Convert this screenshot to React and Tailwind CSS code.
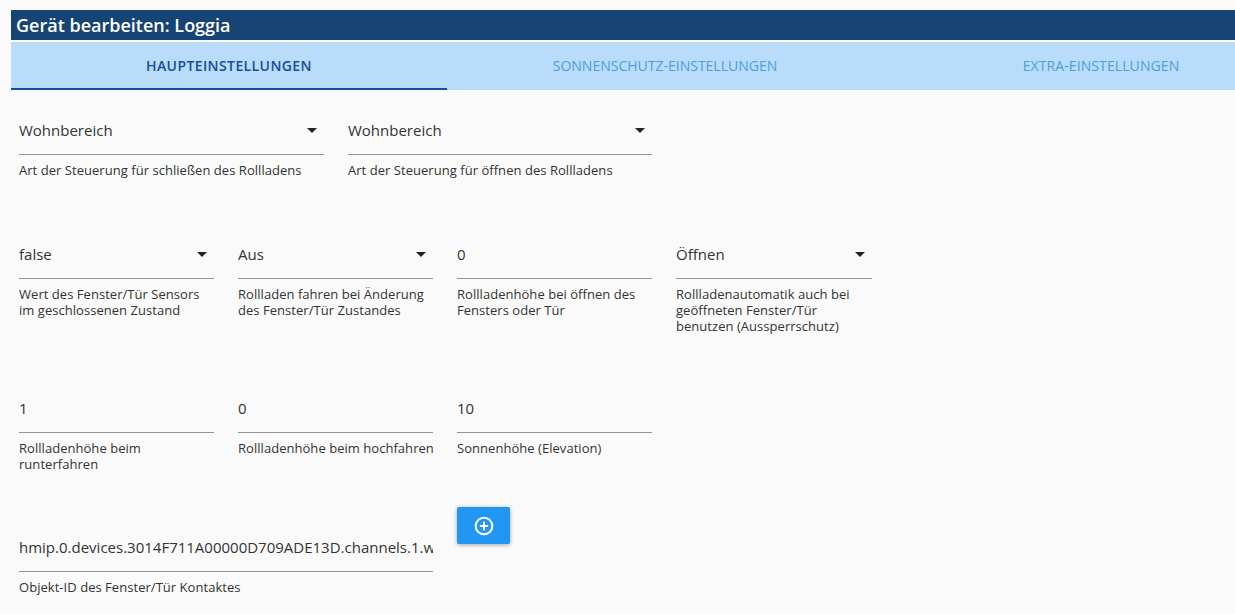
function Caret() {
  return <span className="w-0 h-0 border-x-[5px] border-x-transparent border-t-[5px] border-t-[#222] mr-[7px] flex-shrink-0" />;
}

function Field({ value, help, select, width = "w-[195px]", height = "h-[108px]" }) {
  return (
    <div className={`${width} ${height} flex-shrink-0`}>
      <div className="h-[47px] flex items-center justify-between border-b border-[#949494] pb-[2px] overflow-hidden">
        <span className="text-[15px] text-[#333] whitespace-nowrap">{value}</span>
        {select && <Caret />}
      </div>
      <p className="mt-[7px] -mr-[1px] text-[13px] leading-[16px] tracking-[0.04px] text-[#333]">{help}</p>
    </div>
  );
}

export default function App() {
  return (
    <div className="h-[614px] w-[1235px] overflow-hidden bg-[#fafafa] pt-[10px] pl-[11px] font-['Open_Sans','Noto_Sans',sans-serif]">
      <div className="h-[30px] bg-[#164475] text-white text-[18px] font-semibold leading-[30px] pl-[5px]">
        Gerät bearbeiten: Loggia
      </div>
      <div className="mt-[2px] h-[48px] bg-[#b8dcfa] flex text-[14px] uppercase">
        <div className="w-[436px] flex-shrink-0 flex items-center justify-center border-b-2 border-[#164d9c] font-semibold tracking-[0.4px] text-[#164d9c]">
          Haupteinstellungen
        </div>
        <div className="w-[436px] flex-shrink-0 flex items-center justify-center border-b-2 border-transparent text-[#4d9ee0]">
          Sonnenschutz-Einstellungen
        </div>
        <div className="w-[436px] flex-shrink-0 flex items-center justify-center border-b-2 border-transparent tracking-[0.1px] text-[#4d9ee0] -mr-[84px]">
          Extra-Einstellungen
        </div>
      </div>

      <div className="pl-[8px] pt-[18px]">
        <div className="flex gap-6 h-[124px]">
          <Field value="Wohnbereich" select width="w-[305px]" help="Art der Steuerung für schließen des Rollladens" />
          <Field value="Wohnbereich" select width="w-[304px]" help="Art der Steuerung für öffnen des Rollladens" />
        </div>
        <div className="flex gap-6 h-[154px]">
          <Field value="false" select help="Wert des Fenster/Tür Sensors im geschlossenen Zustand" />
          <Field value="Aus" select help="Rollladen fahren bei Änderung des Fenster/Tür Zustandes" />
          <Field value="0" help="Rollladenhöhe bei öffnen des Fensters oder Tür" />
          <Field value="Öffnen" select width="w-[196px]" help="Rollladenautomatik auch bei geöffneten Fenster/Tür benutzen (Aussperrschutz)" />
        </div>
        <div className="flex gap-6 h-[139px]">
          <Field value="1" help="Rollladenhöhe beim runterfahren" />
          <Field value="0" help="Rollladenhöhe beim hochfahren" />
          <Field value="10" help="Sonnenhöhe (Elevation)" />
        </div>
        <div className="flex gap-6">
          <Field width="w-[414px]" value="hmip.0.devices.3014F711A00000D709ADE13D.channels.1.windowState" help="Objekt-ID des Fenster/Tür Kontaktes" />
          <button className="w-[53px] h-[37px] mt-[-18px] rounded-[2px] bg-[#2196f3] shadow-[0_1px_4px_rgba(0,0,0,0.35)] flex items-center justify-center">
            <svg width="20" height="20" viewBox="0 0 24 24" fill="none" stroke="white" strokeWidth="2.4">
              <circle cx="12" cy="12" r="10" />
              <path d="M12 7v10M7 12h10" />
            </svg>
          </button>
        </div>
      </div>
    </div>
  );
}
